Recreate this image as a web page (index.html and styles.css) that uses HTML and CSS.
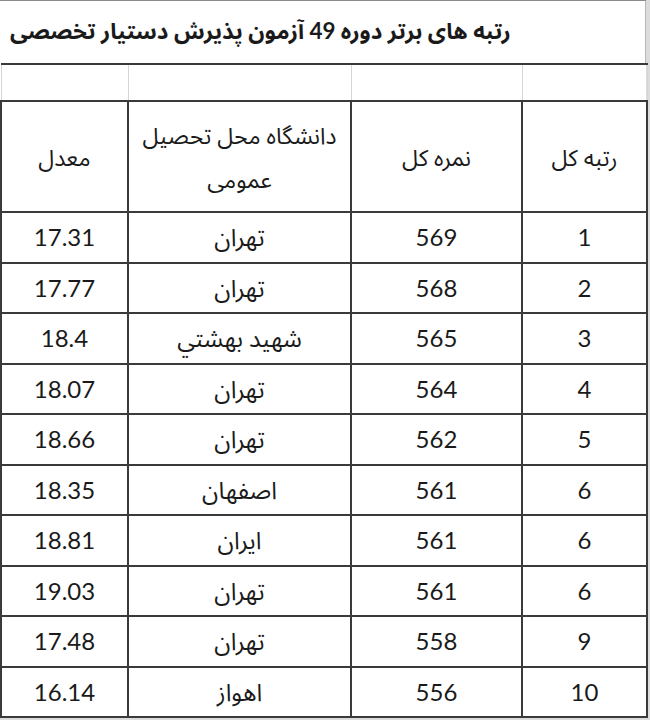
FILE: index.html
```html
<!DOCTYPE html>
<html lang="fa">
<head>
<meta charset="utf-8">
<title>رتبه های برتر</title>
<link rel="stylesheet" href="styles.css">
</head>
<body>
<div class="sheet">
  <div class="title"><span class="title-text" dir="rtl">رتبه های برتر دوره 49 آزمون پذیرش دستیار تخصصی</span></div>
  <table class="grid">
    <colgroup>
      <col class="c1"><col class="c2"><col class="c3"><col class="c4">
    </colgroup>
    <tr class="blank"><td></td><td></td><td></td><td></td></tr>
    <tr class="head">
      <td dir="rtl">معدل</td>
      <td dir="rtl"><span class="two">دانشگاه محل تحصیل<br>عمومی</span></td>
      <td dir="rtl">نمره کل</td>
      <td dir="rtl">رتبه کل</td>
    </tr>
    <tr><td>17.31</td><td dir="rtl">تهران</td><td>569</td><td>1</td></tr>
    <tr><td>17.77</td><td dir="rtl">تهران</td><td>568</td><td>2</td></tr>
    <tr><td>18.4</td><td dir="rtl">شهید بهشتي</td><td>565</td><td>3</td></tr>
    <tr><td>18.07</td><td dir="rtl">تهران</td><td>564</td><td>4</td></tr>
    <tr><td>18.66</td><td dir="rtl">تهران</td><td>562</td><td>5</td></tr>
    <tr><td>18.35</td><td dir="rtl">اصفهان</td><td>561</td><td>6</td></tr>
    <tr><td>18.81</td><td dir="rtl">ایران</td><td>561</td><td>6</td></tr>
    <tr><td>19.03</td><td dir="rtl">تهران</td><td>561</td><td>6</td></tr>
    <tr><td>17.48</td><td dir="rtl">تهران</td><td>558</td><td>9</td></tr>
    <tr><td>16.14</td><td dir="rtl">اهواز</td><td>556</td><td>10</td></tr>
  </table>
</div>
</body>
</html>
```

FILE: styles.css
```css
html, body {
  margin: 0;
  padding: 0;
  background: #dcdcdc;
}
body {
  width: 650px;
  height: 720px;
  overflow: hidden;
  font-family: Lato, "Noto Sans Arabic", "Noto Naskh Arabic", "DejaVu Sans", sans-serif;
  color: #1a1a1a;
}
.sheet {
  width: 646px;
  background: #ffffff;
  border-top: 1px solid #8a8a8a;
  box-sizing: border-box;
}
.title {
  height: 62px;
  display: flex;
  align-items: center;
  padding-left: 10px;
  border-right: 1px solid #b8b8b8;
}
.title-text {
  font-weight: bold;
  font-size: 22.4px;
  white-space: nowrap;
}
.grid {
  width: 646px;
  border-collapse: collapse;
  table-layout: fixed;
}
.c1 { width: 127px; }
.c2 { width: 223px; }
.c3 { width: 171px; }
.c4 { width: 125px; }
.grid td {
  border: 2px solid #3a3a3a;
  text-align: center;
  vertical-align: middle;
  font-size: 24px;
  line-height: 30px;
  height: 50.5px;
  padding: 0;
  box-sizing: border-box;
}
.grid tr.blank td {
  height: 37px;
  border-left: 1px solid #d6d6d6;
  border-right: 1px solid #d6d6d6;
}
.grid tr.head td {
  height: 111px;
  font-size: 23px;
}
.two {
  display: inline-block;
  line-height: 44px;
}
```
